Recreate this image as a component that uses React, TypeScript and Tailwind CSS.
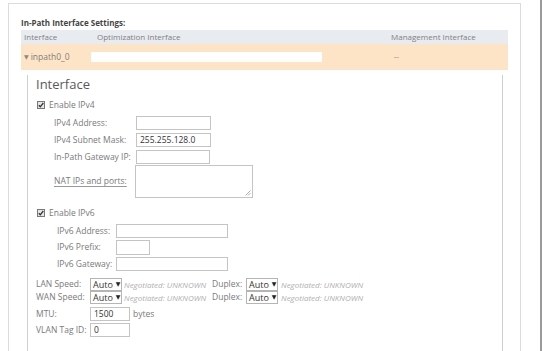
import React from "react";

const font = { fontFamily: '"Open Sans", "DejaVu Sans", sans-serif' };

function Check() {
  return (
    <svg width="8" height="8" viewBox="0 0 8 8" className="shrink-0">
      <rect x="0.5" y="0.5" width="7" height="7" fill="#e6e6e6" stroke="#777" />
      <path d="M1.8 4.2 L3.3 5.8 L6.3 2.0" fill="none" stroke="#333" strokeWidth="1.3" />
    </svg>
  );
}

function Input({ w, h = 14, value }: { w: number; h?: number; value?: string }) {
  return (
    <div
      className="border border-[#c4c4c4] bg-white flex items-center pl-[3px] text-[8.5px] text-[#333] shrink-0 whitespace-nowrap"
      style={{ width: w, height: h }}
    >
      {value}
    </div>
  );
}

function Select() {
  return (
    <div className="w-[32px] h-[13px] border border-[#b5b5b5] bg-white flex items-center pl-[2px] text-[9px] text-[#333] shrink-0">
      <span>Auto</span>
      <span className="text-[6px] ml-[3px] text-[#222]">▼</span>
    </div>
  );
}

function Label({ w, children, cls = "" }: { w: number; children: React.ReactNode; cls?: string }) {
  return (
    <span className={"shrink-0 whitespace-nowrap " + cls} style={{ width: w }}>
      {children}
    </span>
  );
}

export default function App() {
  return (
    <div className="w-[544px] h-[351px] bg-white overflow-hidden flex text-[#7a7a7a] text-[8.5px]" style={font}>
      <div className="flex-1 pl-[8px] pt-[3px]">
        <div className="w-[513px] h-[348px] border border-b-0 border-[#dcdcdc] pl-[12px] pt-[12px]">
          <div className="h-[14px] flex items-center font-bold text-[8px] text-[#444] whitespace-nowrap">In-Path Interface Settings:</div>
          <div className="w-[487px] h-[14px] bg-[#e8ecf0] flex items-center text-[8px] text-[#808080] whitespace-nowrap">
            <span className="ml-[3px] w-[73px] shrink-0">Interface</span>
            <span className="w-[294px] shrink-0">Optimization Interface</span>
            <span>Management Interface</span>
          </div>
          <div className="w-[487px] h-[26px] bg-[#fde4c6] flex items-center text-[8.5px] text-[#808080] whitespace-nowrap">
            <span className="ml-[3px] text-[6px] text-[#888]">▼</span>
            <span className="ml-[2px] w-[60px] shrink-0">inpath0_0</span>
            <div className="w-[231px] h-[10px] bg-white shrink-0"></div>
            <span className="ml-[72px] text-[#999]">--</span>
          </div>
          <div className="ml-[6px] w-[476px] h-[290px] border-x border-[#cfcfcf] bg-white">
            <div className="h-[20px] mt-[5px] pl-[8px] flex items-center text-[13px] text-[#5a5a5a]">Interface</div>
            <div className="mt-[3px] h-[14px] flex items-center pl-[9px] gap-[4px]">
              <Check />
              <span className="whitespace-nowrap">Enable IPv4</span>
            </div>
            <div className="pl-[26px]">
              <div className="mt-[4px] h-[14px] flex items-center">
                <Label w={82}>IPv4 Address:</Label>
                <Input w={75} />
              </div>
              <div className="mt-[3px] h-[14px] flex items-center">
                <Label w={82}>IPv4 Subnet Mask:</Label>
                <Input w={75} value="255.255.128.0" />
              </div>
              <div className="mt-[3px] h-[14px] flex items-center">
                <Label w={82}>In-Path Gateway IP:</Label>
                <Input w={74} h={14} />
              </div>
              <div className="mt-[1px] h-[33px] flex items-center">
                <Label w={81} cls="underline decoration-[#999] underline-offset-2">NAT IPs and ports:</Label>
                <div className="relative w-[118px] h-[33px] border border-[#c4c4c4] bg-white shrink-0">
                  <svg width="6" height="6" viewBox="0 0 6 6" className="absolute right-[1px] bottom-[1px]">
                    <path d="M5.5 0.5 L0.5 5.5 M5.5 3 L3 5.5" stroke="#999" strokeWidth="0.8" />
                  </svg>
                </div>
              </div>
            </div>
            <div className="mt-[8px] h-[14px] flex items-center pl-[9px] gap-[4px]">
              <Check />
              <span className="whitespace-nowrap">Enable IPv6</span>
            </div>
            <div className="pl-[29px]">
              <div className="mt-[4px] h-[14px] flex items-center">
                <Label w={59}>IPv6 Address:</Label>
                <Input w={112} />
              </div>
              <div className="mt-[2px] h-[15px] flex items-center">
                <Label w={59}>IPv6 Prefix:</Label>
                <Input w={34} h={15} />
              </div>
              <div className="mt-[2px] h-[14px] flex items-center">
                <Label w={59}>IPv6 Gateway:</Label>
                <Input w={112} />
              </div>
            </div>
            <div className="pl-[8px]">
              <div className="mt-[7px] h-[13px] flex items-center">
                <Label w={54}>LAN Speed:</Label>
                <Select />
                <Label w={88} cls="ml-[2px] italic text-[8px] text-[#b0b0b0]">Negotiated: UNKNOWN</Label>
                <Label w={34}>Duplex:</Label>
                <Select />
                <Label w={90} cls="ml-[3px] italic text-[8px] text-[#b0b0b0]">Negotiated: UNKNOWN</Label>
              </div>
              <div className="h-[13px] flex items-center">
                <Label w={54}>WAN Speed:</Label>
                <Select />
                <Label w={88} cls="ml-[2px] italic text-[8px] text-[#b0b0b0]">Negotiated: UNKNOWN</Label>
                <Label w={34}>Duplex:</Label>
                <Select />
                <Label w={90} cls="ml-[3px] italic text-[8px] text-[#b0b0b0]">Negotiated: UNKNOWN</Label>
              </div>
              <div className="mt-[3px] h-[14px] flex items-center">
                <Label w={54}>MTU:</Label>
                <Input w={40} value="1500" />
                <span className="ml-[3px]">bytes</span>
              </div>
              <div className="mt-[2px] h-[14px] flex items-center">
                <Label w={54}>VLAN Tag ID:</Label>
                <Input w={40} value="0" />
              </div>
            </div>
          </div>
        </div>
      </div>
      <div className="w-[2px] h-full bg-[#9a9a9a] mr-[2px]"></div>
    </div>
  );
}
